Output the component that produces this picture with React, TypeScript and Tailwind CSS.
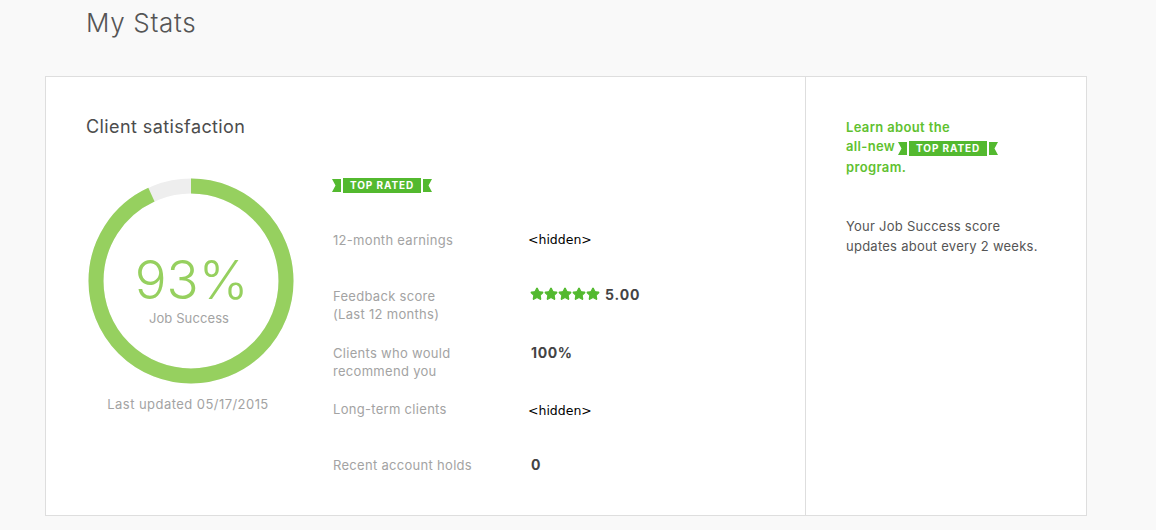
import { Star } from "lucide-react";

const font = { label: "text-[13px] leading-[18px] tracking-[0.3px] text-[#a3a3a3]" };

function TopRated() {
  return (
    <span className="inline-flex items-center h-[15px] align-middle">
      <svg width="9" height="13" viewBox="0 0 9 13" className="block">
        <path d="M0 0H9V13H0L3.5 6.5Z" fill="#53b92f" />
      </svg>
      <span className="ml-[2px] h-[15px] w-[78px] bg-[#53b92f] text-white text-[10px] font-bold leading-[15px] text-center tracking-[0.9px]">
        TOP RATED
      </span>
      <svg width="9" height="13" viewBox="0 0 9 13" className="block ml-[2px]">
        <path d="M0 0H9L5.5 6.5L9 13H0Z" fill="#53b92f" />
      </svg>
    </span>
  );
}

function Ring() {
  const r = 95;
  const c = 2 * Math.PI * r;
  return (
    <div className="relative w-[206px] h-[206px]">
      <svg width="206" height="206" viewBox="0 0 206 206" className="-rotate-90">
        <circle cx="103" cy="103" r={r} fill="none" stroke="#eeeeee" strokeWidth="15" />
        <circle
          cx="103"
          cy="103"
          r={r}
          fill="none"
          stroke="#96d05f"
          strokeWidth="15"
          strokeDasharray={`${c * 0.93} ${c}`}
        />
      </svg>
      <div className="absolute inset-0 flex flex-col items-center pt-[74px]">
        <div className="text-[53px] leading-[57px] font-light text-[#96d05f] ml-[1px]">93%</div>
        <div className="text-[13px] leading-[18px] tracking-[0.1px] text-[#a3a3a3] -ml-[4px]">Job Success</div>
      </div>
    </div>
  );
}

export default function App() {
  return (
    <div className="w-[1156px] h-[530px] overflow-hidden bg-[#f9f9f9] font-['Inter',sans-serif]">
      <h1 className="pl-[86px] pt-[6px] h-[76px] text-[26px] leading-[34px] tracking-[0.7px] font-light text-[#555555]">My Stats</h1>

      <div className="ml-[45px] w-[1042px] h-[440px] flex bg-white border border-[#dedede]">
        <div className="w-[760px] pl-[40px] pt-[38px] border-r border-[#dedede]">
          <h2 className="text-[18px] leading-[24px] tracking-[0.4px] text-[#4c4c4c]">Client satisfaction</h2>

          <div className="flex mt-[39px]">
            <div className="w-[247px]">
              <div className="ml-[2px]">
                <Ring />
              </div>
              <div className="w-[206px] -ml-[1px] mt-[11px] text-center text-[13px] leading-[18px] tracking-[0.45px] text-[#a3a3a3]">
                Last updated 05/17/2015
              </div>
            </div>

            <div className="w-[400px]">
              <div className="h-[15px] flex -ml-[1px]">
                <TopRated />
              </div>

              <div className="grid grid-cols-[197px_1fr] mt-[38px]">
                <div className={`${font.label} h-[56px]`}>12-month earnings</div>
                <div className="text-[12.5px] leading-[18px] text-black font-['DejaVu_Sans',sans-serif] -ml-[2px]">&lt;hidden&gt;</div>

                <div className={`${font.label} h-[57px]`}>
                  Feedback score
                  <br />
                  (Last 12 months)
                </div>
                <div className="flex items-center h-[16px] -mt-[1px] gap-[5px] text-[14px] font-bold tracking-[0.9px] text-[#444444]">
                  <span className="flex">
                    {[0, 1, 2, 3, 4].map((i) => (
                      <Star key={i} size={14} fill="#53b92f" stroke="#53b92f" />
                    ))}
                  </span>
                  5.00
                </div>

                <div className={`${font.label} h-[57px]`}>
                  Clients who would
                  <br />
                  recommend you
                </div>
                <div className="text-[14px] leading-[16px] mt-[1px] ml-[1px] font-bold tracking-[0.6px] text-[#444444]">100%</div>

                <div className={`${font.label} h-[56px] -mt-[1px]`}>Long-term clients</div>
                <div className="text-[12.5px] leading-[18px] mt-[1px] text-black font-['DejaVu_Sans',sans-serif] -ml-[2px]">&lt;hidden&gt;</div>

                <div className={font.label}>Recent account holds</div>
                <div className="text-[14px] leading-[18px] ml-[1px] font-bold tracking-[0.6px] text-[#444444]">0</div>
              </div>
            </div>
          </div>
        </div>

        <div className="flex-1 pl-[40px] pt-[40px]">
          <div className="text-[13px] leading-[20px] tracking-[0.35px] font-semibold text-[#5fc12f]">
            <div>Learn about the</div>
            <div className="flex items-center h-[20px] gap-[3px]">
              <span className="-mt-[2px]">all-new</span>
              <span className="flex mt-[2px]">
                <TopRated />
              </span>
            </div>
            <div>program.</div>
          </div>
          <div className="mt-[39px] text-[13px] leading-[20px] tracking-[0.25px] text-[#555555]">
            Your Job Success score
            <br />
            updates about every 2 weeks.
          </div>
        </div>
      </div>
    </div>
  );
}
